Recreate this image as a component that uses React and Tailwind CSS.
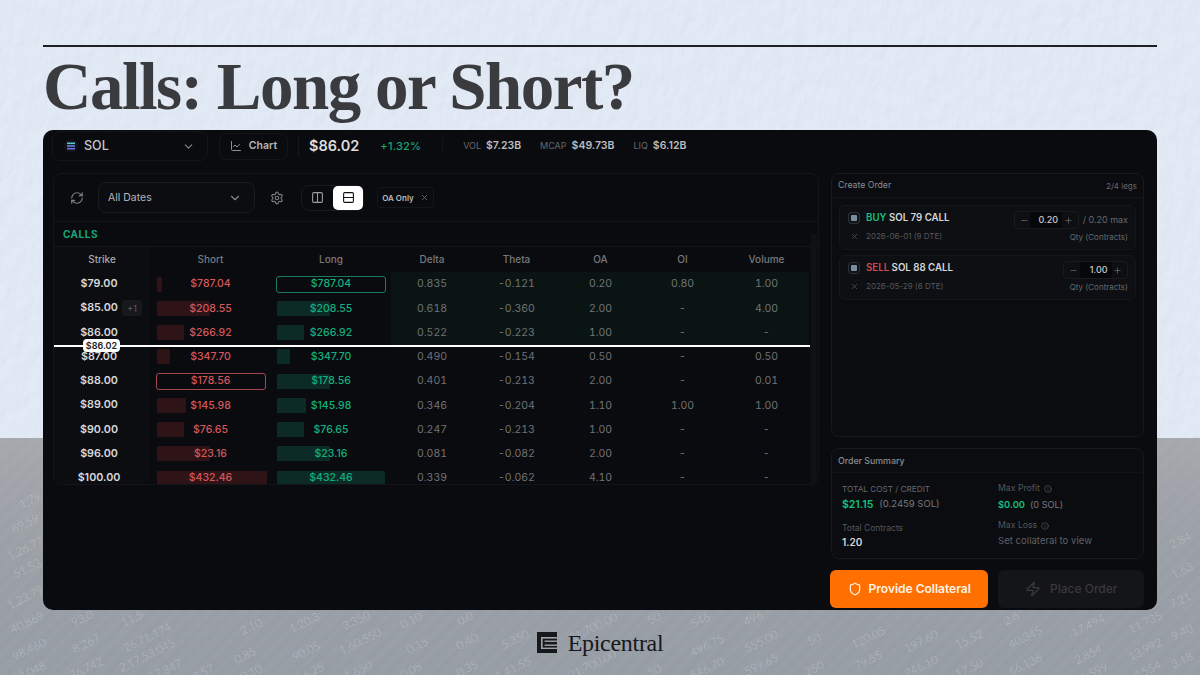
import { ChartLine, ChevronDown, Columns2, Info, Minus, Plus, RefreshCw, Rows2, Settings, Shield, X, Zap } from "lucide-react";

const rows = [
  { strike: "$79.00", short: "$787.04", long: "$787.04", sw: 5, lw: 0, pick: "long", delta: "0.835", theta: "-0.121", oa: "0.20", oi: "0.80", vol: "1.00", itm: true },
  { strike: "$85.00", short: "$208.55", long: "$208.55", sw: 53, lw: 53, extra: "+1", delta: "0.618", theta: "-0.360", oa: "2.00", oi: "-", vol: "4.00", itm: true },
  { strike: "$86.00", short: "$266.92", long: "$266.92", sw: 27, lw: 27, delta: "0.522", theta: "-0.223", oa: "1.00", oi: "-", vol: "-", itm: true },
  { strike: "$87.00", short: "$347.70", long: "$347.70", sw: 13, lw: 13, delta: "0.490", theta: "-0.154", oa: "0.50", oi: "-", vol: "0.50" },
  { strike: "$88.00", short: "$178.56", long: "$178.56", sw: 0, lw: 53, pick: "short", delta: "0.401", theta: "-0.213", oa: "2.00", oi: "-", vol: "0.01" },
  { strike: "$89.00", short: "$145.98", long: "$145.98", sw: 29, lw: 29, delta: "0.346", theta: "-0.204", oa: "1.10", oi: "1.00", vol: "1.00" },
  { strike: "$90.00", short: "$76.65", long: "$76.65", sw: 27, lw: 27, delta: "0.247", theta: "-0.213", oa: "1.00", oi: "-", vol: "-" },
  { strike: "$96.00", short: "$23.16", long: "$23.16", sw: 53, lw: 53, delta: "0.081", theta: "-0.082", oa: "2.00", oi: "-", vol: "-" },
  { strike: "$100.00", short: "$432.46", long: "$432.46", sw: 110, lw: 108, delta: "0.339", theta: "-0.062", oa: "4.10", oi: "-", vol: "-" },
];

// faint ticker numbers printed on the grey lower half
const tickers = [
  [30, 500, "1,79"], [25, 523, "69,59"], [25, 548, "1,26,77"], [27, 568, "51,53"], [25, 597, "1,23,79"],
  [27, 622, "40,869"], [29, 649, "98,460"], [29, 672, "53,048"], [82, 618, "93,0"], [86, 643, "8,267"], [86, 668, "36,742"],
  [132, 618, "11,5"], [147, 637, "26,71,174"], [147, 655, "2,17,53,045"], [165, 670, "57,347"], [251, 626, "2.10"],
  [245, 655, "0.85"], [251, 672, "0.10"], [203, 672, "2.57"], [304, 622, "1,20,3"], [306, 651, "90.05"], [310, 672, "66.25"],
  [356, 620, "3,350"], [360, 641, "1,60,550"], [358, 670, "1,650"], [411, 620, "0.10"], [417, 645, "0.15"], [411, 670, "0.05"],
  [465, 618, "0.0"], [467, 641, "0.40"], [467, 668, "0.35"], [515, 639, "5,350"], [513, 668, "1,41,55"], [593, 627, "21,700.00"],
  [592, 664, "21,700.00"], [654, 618, "50"], [654, 670, "50"], [700, 620, "546"], [707, 645, "496.75"], [707, 668, "546.70"],
  [753, 618, "496"], [761, 641, "555.00"], [761, 664, "599.65"], [814, 639, "50"], [814, 668, "250"], [868, 637, "120.05"], [868, 660, "79.55"],
  [921, 641, "197.60"], [921, 666, "246.10"], [969, 639, "15.52"], [969, 668, "17.50"], [1011, 618, "2.6"], [1025, 637, "40,345"],
  [1025, 664, "66,136"], [1086, 626, "-17,494"], [1086, 655, "-2,854"], [1094, 672, "1,599"], [1145, 622, "11,735"], [1145, 649, "13,992"],
  [1147, 670, "4,554"], [1180, 540, "2,84"], [1182, 570, "1,63"], [1180, 600, "7,21"], [1182, 632, "9,40"], [1182, 660, "3,18"],
];

function Backdrop() {
  return (
    <div className="absolute inset-0 overflow-hidden">
      <svg className="absolute left-0 top-0 w-[1200px] h-[438px]">
        <filter id="paper">
          <feTurbulence type="fractalNoise" baseFrequency="0.09 0.05" numOctaves="4" seed="7" />
          <feDiffuseLighting surfaceScale="0.55" lightingColor="#e7effb">
            <feDistantLight azimuth="60" elevation="70" />
          </feDiffuseLighting>
        </filter>
        <rect width="1200" height="438" filter="url(#paper)" />
      </svg>
      <div className="absolute left-0 top-[438px] w-[1200px] h-[237px] bg-[linear-gradient(180deg,#a6a9ae_0%,#9ca1a8_45%,#989ea6_100%)]" />
      <div className="absolute left-0 top-[438px] w-[1200px] h-[237px] opacity-20 bg-[repeating-linear-gradient(135deg,#ffffff22_0px,#ffffff22_1px,#00000018_1px,#00000018_2px)]" />
      {tickers.map(([x, y, text], i) => (
        <span
          key={i}
          className="absolute -translate-x-1/2 -translate-y-1/2 whitespace-nowrap text-[11.5px] font-light text-white/30 font-['Lato',sans-serif] [rotate:-26deg]"
          style={{ left: x, top: y }}
        >
          {text}
        </span>
      ))}
    </div>
  );
}

function SolMark() {
  return (
    <svg width="14" height="14" viewBox="0 0 14 14">
      <circle cx="7" cy="7" r="7" fill="#10131c" />
      <rect x="3" y="3.5" width="8" height="1.6" fill="#5ec4d8" />
      <rect x="3" y="6.2" width="8" height="1.6" fill="#5b86d8" />
      <rect x="3" y="8.9" width="8" height="1.6" fill="#7a6be0" />
    </svg>
  );
}

function PriceCell({ value, width, selected, tone }) {
  const isRed = tone === "red";
  return (
    <div className="flex items-center justify-center h-full">
      <div
        className={`relative w-[110px] h-[17px] flex items-center justify-center rounded-[3px] border ${
          selected ? (isRed ? "border-[#a3484e]" : "border-[#1d7a62]") : "border-transparent"
        }`}
      >
        {width > 0 && (
          <div
            className={`absolute left-0 top-0 h-[15px] rounded-[1px] ${isRed ? "bg-[#2e1416]" : "bg-[#0d2b26]"}`}
            style={{ width }}
          />
        )}
        <span className={`relative text-[10.5px] font-medium ${isRed ? "text-[#d5575c]" : "text-[#12b07f]"}`}>{value}</span>
      </div>
    </div>
  );
}

function Row({ r }) {
  const cell = `flex items-center justify-center text-[10.5px] tabular-nums text-[#6f7276] ${r.itm ? "bg-[#0a1513]" : ""}`;
  return (
    <div className="grid grid-cols-[96px_121px_120px_82px_87px_81px_83px_85px] h-[24.25px]">
      <div className="relative flex items-center justify-center pr-[6px] bg-[#0c0d11] text-[10.75px] font-semibold text-[#d8d9db]">
        {r.strike}
        {r.extra && (
          <span className="absolute left-[68px] top-[4px] w-[20px] h-[16px] rounded-[3px] bg-[#17191c] flex items-center justify-center text-[9px] font-normal text-[#5d5f63]">
            {r.extra}
          </span>
        )}
      </div>
      <PriceCell value={r.short} width={r.sw} selected={r.pick === "short"} tone="red" />
      <PriceCell value={r.long} width={r.lw} selected={r.pick === "long"} tone="green" />
      <div className={cell}>{r.delta}</div>
      <div className={cell}>{r.theta}</div>
      <div className={cell}>{r.oa}</div>
      <div className={cell}>{r.oi}</div>
      <div className={cell}>{r.vol}</div>
    </div>
  );
}

function OptionsTable() {
  const head = "flex items-center justify-center text-[10px] font-medium text-[#77797d]";
  return (
    <div className="relative w-[766px] h-[312px] shrink-0 ml-px rounded-lg border border-[#131519] bg-[#0a0b0e] overflow-hidden">
      <div className="h-[48px] flex items-center pl-[15px] border-b border-[#131519]">
        <RefreshCw size={14} className="text-[#7d7f83] mx-px" />
        <div className="ml-[13px] w-[157px] h-[31px] rounded-lg border border-[#181b20] flex items-center justify-between pl-[9px] pr-[12px] bg-[#0b0d11]">
          <span className="text-[10.5px] text-[#b4b6b9]">All Dates</span>
          <ChevronDown size={14} className="text-[#85878b]" />
        </div>
        <Settings size={14} className="ml-[15px] text-[#777a7e]" />
        <div className="ml-[17px] w-[63px] h-[26px] rounded-lg border border-[#181b20] flex items-center justify-between pl-[9px]">
          <Columns2 size={13} className="text-[#9b9da0]" />
          <div className="w-[30px] h-[24px] rounded-[5px] bg-white flex items-center justify-center">
            <Rows2 size={13} className="text-[#111]" />
          </div>
        </div>
        <div className="ml-[13px] w-[57px] h-[21px] rounded border border-[#14161a] flex items-center justify-center gap-[6px]">
          <span className="text-[8px] font-semibold text-[#b8babd]">OA Only</span>
          <X size={9} className="text-[#77797d]" />
        </div>
      </div>
      <div className="h-[25px] flex items-center pl-[9px] border-b border-[#131519] text-[10px] font-bold tracking-[0.5px] text-[#14a877]">
        CALLS
      </div>
      <div className="grid grid-cols-[96px_121px_120px_82px_87px_81px_83px_85px] h-[25px]">
        <div className={`${head} bg-[#0c0d11] text-[#a6a8ab]`}>Strike</div>
        <div className={`${head} text-[#8d8f93]`}>Short</div>
        <div className={`${head} text-[#8d8f93]`}>Long</div>
        <div className={head}>Delta</div>
        <div className={head}>Theta</div>
        <div className={head}>OA</div>
        <div className={head}>OI</div>
        <div className={head}>Volume</div>
      </div>
      {rows.map((r) => (
        <Row key={r.strike} r={r} />
      ))}
      <div className="absolute right-px top-[60px] bottom-0 w-[6px] bg-[#0f1115]" />
      <div className="absolute left-0 top-[171px] w-[756px] h-[2px] bg-white" />
      <div className="absolute left-[29px] top-[165px] w-[37px] h-[13px] rounded-[4px] bg-white flex items-center justify-center text-[9px] font-semibold text-[#222]">
        $86.02
      </div>
    </div>
  );
}

function Stepper({ value }) {
  return (
    <div className="w-[65px] h-[18px] rounded-[4px] border border-[#181a1e] flex items-center justify-between">
      <Minus size={9} className="ml-[5px] text-[#66686c]" />
      <span className="w-[32px] h-full bg-[#060709] flex items-center justify-end pr-[4px] text-[9px] font-medium text-[#c9cacc]">{value}</span>
      <Plus size={9} className="mr-[5px] text-[#66686c]" />
    </div>
  );
}

function Leg({ side, sideClass, name, date, qty, max }) {
  return (
    <div className="h-[45px] rounded-md border border-[#14161a] bg-[#0d0f13] flex justify-between pr-[7px]">
      <div className="pl-[8px] pt-[5px]">
        <div className="flex items-center gap-[6px] h-[14px]">
          <div className="w-[12px] h-[12px] rounded-[3px] border border-[#2c3138] bg-[#101318] flex items-center justify-center">
            <div className="w-[6px] h-[6px] rounded-[1px] bg-[#7a8c9e]" />
          </div>
          <div className="text-[9.7px] font-semibold text-[#d6d7d9]">
            <span className={sideClass}>{side}</span> {name}
          </div>
        </div>
        <div className="flex items-center gap-[7px] mt-[4px] h-[14px]">
          <X size={9} className="ml-[2px] text-[#55575b]" />
          <span className="text-[8px] text-[#55575b]">{date}</span>
        </div>
      </div>
      <div className="flex flex-col items-end pt-[5px]">
        <div className="flex items-center gap-[4px] h-[18px]">
          <Stepper value={qty} />
          {max && <span className="text-[9px] text-[#66686c]">{max}</span>}
        </div>
        <span className="mt-[2px] text-[8px] text-[#66686c]">Qty (Contracts)</span>
      </div>
    </div>
  );
}

function CreateOrder() {
  return (
    <div className="h-[264px] rounded-lg border border-[#17191d] bg-[#0b0c10]">
      <div className="h-[24px] flex items-center justify-between px-[6px] border-b border-[#131519]">
        <span className="text-[8.7px] text-[#8a8c90]">Create Order</span>
        <span className="text-[8px] text-[#66686c]">2/4 legs</span>
      </div>
      <div className="flex flex-col gap-[5px] px-[7px] pt-[7px]">
        <Leg side="BUY" sideClass="text-[#14c07f]" name="SOL 79 CALL" date="2026-06-01 (9 DTE)" qty="0.20" max="/ 0.20 max" />
        <Leg side="SELL" sideClass="text-[#d8474c]" name="SOL 88 CALL" date="2026-05-29 (6 DTE)" qty="1.00" />
      </div>
    </div>
  );
}

function OrderSummary() {
  return (
    <div className="h-[111px] rounded-lg border border-[#17191d] bg-[#0a0c10]">
      <div className="h-[24px] flex items-center px-[6px] border-b border-[#101216] text-[8.8px] font-medium text-[#8a8c90]">Order Summary</div>
      <div className="grid grid-cols-[156px_1fr] pl-[10px] pt-[9px]">
        <div>
          <div className="h-[14px] flex items-center text-[8.2px] text-[#66686c]">TOTAL COST / CREDIT</div>
          <div className="h-[17px] flex items-center gap-[6px]">
            <span className="text-[10.5px] font-semibold text-[#14c07f]">$21.15</span>
            <span className="text-[9.5px] text-[#77797d]">(0.2459 SOL)</span>
          </div>
          <div className="h-[14px] mt-[8px] flex items-center text-[8.5px] text-[#55575b]">Total Contracts</div>
          <div className="h-[15px] flex items-center text-[10px] font-semibold text-[#d6d7d9]">1.20</div>
        </div>
        <div>
          <div className="h-[14px] flex items-center gap-[4px] text-[8.7px] text-[#55575b]">
            Max Profit <Info size={8} />
          </div>
          <div className="h-[17px] flex items-center gap-[5px]">
            <span className="text-[9.3px] font-semibold text-[#14c07f]">$0.00</span>
            <span className="text-[9.2px] text-[#77797d]">(0 SOL)</span>
          </div>
          <div className="h-[14px] mt-[6px] flex items-center gap-[4px] text-[8.7px] text-[#55575b]">
            Max Loss <Info size={8} />
          </div>
          <div className="h-[17px] flex items-center text-[9.6px] text-[#5f6165]">Set collateral to view</div>
        </div>
      </div>
    </div>
  );
}

function Stat({ label, value }) {
  return (
    <div className="flex items-center gap-[5px]">
      <span className="text-[9px] text-[#66686c]">{label}</span>
      <span className="text-[10.5px] font-semibold text-[#b9bbbe]">{value}</span>
    </div>
  );
}

function Terminal() {
  return (
    <div className="w-[1114px] h-[480px] shrink-0 rounded-[10px] bg-[#0a0b0f] pl-[9px] pt-px">
      <div className="h-[30px] flex items-center">
        <div className="w-[156px] h-[30px] rounded-lg border border-[#13151a] flex items-center justify-between pl-[11px] pr-[12px]">
          <div className="flex items-center gap-[6px]">
            <SolMark />
            <span className="text-[12.5px] font-medium text-[#c5c7ca]">SOL</span>
          </div>
          <ChevronDown size={13} className="text-[#85878b]" />
        </div>
        <div className="ml-[11px] w-[69px] h-[27px] rounded-lg border border-[#14161b] flex items-center justify-center gap-[7px]">
          <ChartLine size={12} className="text-[#8f9195]" />
          <span className="text-[10.5px] font-semibold text-[#b4b6b9]">Chart</span>
        </div>
        <div className="ml-[10px] w-px h-[20px] bg-[#16181c]" />
        <span className="ml-[10px] text-[14.5px] font-semibold text-[#dcdddf]">$86.02</span>
        <span className="ml-[21px] text-[11px] font-medium tracking-[0.2px] text-[#14a877]">+1.32%</span>
        <div className="ml-[21px] w-px h-[18px] bg-[#121418]" />
        <div className="ml-[20px] flex items-center gap-[19px]">
          <Stat label="VOL" value="$7.23B" />
          <Stat label="MCAP" value="$49.73B" />
          <Stat label="LIQ" value="$6.12B" />
        </div>
      </div>
      <div className="mt-[12px] flex gap-[12px]">
        <OptionsTable />
        <div className="w-[313px] flex flex-col gap-[11px]">
          <CreateOrder />
          <OrderSummary />
          <div className="flex gap-[10px] -ml-px">
            <button className="w-[159px] h-[38px] rounded-md bg-[#ff7000] flex items-center justify-center gap-[7px] text-[12px] font-semibold text-[#fff3e6]">
              <Shield size={14} />
              Provide Collateral
            </button>
            <button className="w-[146px] h-[38px] rounded-md bg-[#141518] flex items-center justify-center gap-[9px] text-[12px] font-medium text-[#38393c]">
              <Zap size={16} />
              Place Order
            </button>
          </div>
        </div>
      </div>
    </div>
  );
}

function Logo() {
  return (
    <div className="flex items-center gap-[11px]">
      <svg width="20" height="21" viewBox="0 0 20 21">
        <rect width="20" height="21" fill="#17181b" />
        <rect x="4" y="5" width="1.6" height="12" fill="#a0a4aa" />
        <rect x="4" y="5" width="16" height="1.6" fill="#a0a4aa" />
        <rect x="7.5" y="8.5" width="12.5" height="1.4" fill="#a0a4aa" />
        <rect x="7.5" y="12.5" width="12.5" height="1.4" fill="#a0a4aa" />
        <rect x="4" y="15.6" width="16" height="1.4" fill="#a0a4aa" />
      </svg>
      <span className="text-[24px] leading-none tracking-[-0.3px] text-[#17181b] font-['Liberation_Serif',serif]">Epicentral</span>
    </div>
  );
}

export default function App() {
  return (
    <div className="relative w-[1200px] h-[675px] overflow-hidden bg-[#dfe6f2] font-['Inter',sans-serif]">
      <Backdrop />
      <div className="relative h-full flex flex-col px-[43px] pt-[45px]">
        <div className="h-[2px] bg-[#1f2024]" />
        <h1 className="h-[83px] pt-[3px] text-[67px] leading-[72px] font-bold tracking-[-1.5px] whitespace-nowrap text-[#3a3b3f] font-['Liberation_Serif',serif]">
          Calls: Long or Short?
        </h1>
        <Terminal />
        <div className="flex-1 flex items-center justify-center">
          <Logo />
        </div>
      </div>
    </div>
  );
}
